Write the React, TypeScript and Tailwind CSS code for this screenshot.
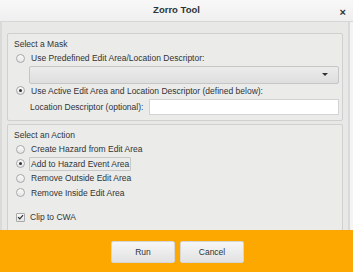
import React from 'react';

const font = { fontFamily: '"Liberation Sans", Arial, sans-serif' };

const Radio = ({ checked, label, focus }: { checked?: boolean; label: string; focus?: boolean }) => (
  <div className="flex items-center h-[14.5px]">
    <span className="ml-[8px] w-[9px] h-[9px] shrink-0 rounded-full border border-[#a8a8a8] bg-gradient-to-b from-[#fafafa] to-[#e6e6e6] flex items-center justify-center">
      {checked && <span className="w-[3px] h-[3px] rounded-full bg-[#2e3436]" />}
    </span>
    <span
      className={
        'ml-[4px] px-[1px] text-[8.5px] leading-[12px] whitespace-nowrap text-[#2e3436] ' +
        (focus ? 'border border-[#c9c9c9] rounded-[1px]' : 'border border-transparent')
      }
    >
      {label}
    </span>
  </div>
);

export default function App() {
  return (
    <div className="w-[353px] h-[272px] bg-[#f4f4f4] overflow-hidden flex flex-col" style={font}>
      {/* title bar */}
      <div className="h-[22px] shrink-0 bg-gradient-to-b from-[#f8f8f8] to-[#efefef] border-b border-[#d6d6d6] flex items-center relative">
        <span className="flex-1 text-center text-[9.5px] font-bold text-[#2e3436]">Zorro Tool</span>
        <span className="absolute right-[7px] top-[4px] text-[11px] font-bold text-[#2e3436]">×</span>
      </div>
      <div className="flex-1 flex flex-col bg-[#e8e8e7] border-l-2 border-r-2 border-[#dadada] mr-[3px] px-[5px] pt-[11px] gap-[3px]">
        {/* mask panel */}
        <div className="h-[88px] shrink-0 border border-[#d0d0cf] rounded-[2px] bg-[#ebebea] pt-[4px]">
          <div className="ml-[6px] text-[8.5px] leading-[12px] text-[#2e3436]">Select a Mask</div>
          <div className="mt-[1px]">
            <Radio label="Use Predefined Edit Area/Location Descriptor:" />
          </div>
          <div className="ml-[21px] mr-[3px] h-[18px] rounded-[2px] border border-[#c6c6c6] bg-gradient-to-b from-[#ececec] to-[#dedede] flex items-center justify-end pr-[10px]">
            <span className="w-0 h-0 border-l-[3px] border-r-[3px] border-t-[3px] border-l-transparent border-r-transparent border-t-[#2e3436]" />
          </div>
          <Radio checked label="Use Active Edit Area and Location Descriptor (defined below):" />
          <div className="flex items-center ml-[22px] mr-[3px] mt-[1px]">
            <span className="text-[8.5px] leading-[12px] whitespace-nowrap text-[#2e3436] w-[119px]">Location Descriptor (optional):</span>
            <div className="flex-1 h-[16px] bg-white border border-[#d3d3d3]" />
          </div>
        </div>
        {/* action panel */}
        <div className="flex-1 border border-b-0 border-[#d0d0cf] rounded-t-[2px] bg-[#ebebea] pt-[4px]">
          <div className="ml-[6px] text-[8.5px] leading-[12px] text-[#2e3436]">Select an Action</div>
          <div className="mt-[1px]">
            <Radio label="Create Hazard from Edit Area" />
            <Radio checked focus label="Add to Hazard Event Area" />
            <Radio label="Remove Outside Edit Area" />
            <Radio label="Remove Inside Edit Area" />
          </div>
          <div className="flex items-center mt-[10px] h-[14px]">
            <span className="ml-[8px] w-[9px] h-[9px] rounded-[1px] border border-[#a8a8a8] bg-gradient-to-b from-[#fafafa] to-[#e6e6e6] flex items-center justify-center">
              <svg viewBox="0 0 10 10" className="w-[8px] h-[8px]">
                <path d="M1.5 5.2 L4 7.6 L8.6 2.2" fill="none" stroke="#2e3436" strokeWidth="1.8" />
              </svg>
            </span>
            <span className="ml-[5px] text-[8.5px] leading-[12px] text-[#2e3436]">Clip to CWA</span>
          </div>
        </div>
      </div>
      {/* footer */}
      <div className="h-[42px] shrink-0 bg-[#fca800] flex justify-center gap-[5px] pt-[11px] pl-[2px]">
        <button className="w-[64px] h-[22px] rounded-[2px] border border-[#d6d6d6] bg-gradient-to-b from-[#f6f6f6] to-[#e2e2e2] text-[8.5px] text-[#2e3436]">Run</button>
        <button className="w-[64px] h-[22px] rounded-[2px] border border-[#d6d6d6] bg-gradient-to-b from-[#f6f6f6] to-[#e2e2e2] text-[8.5px] text-[#2e3436]">Cancel</button>
      </div>
    </div>
  );
}
